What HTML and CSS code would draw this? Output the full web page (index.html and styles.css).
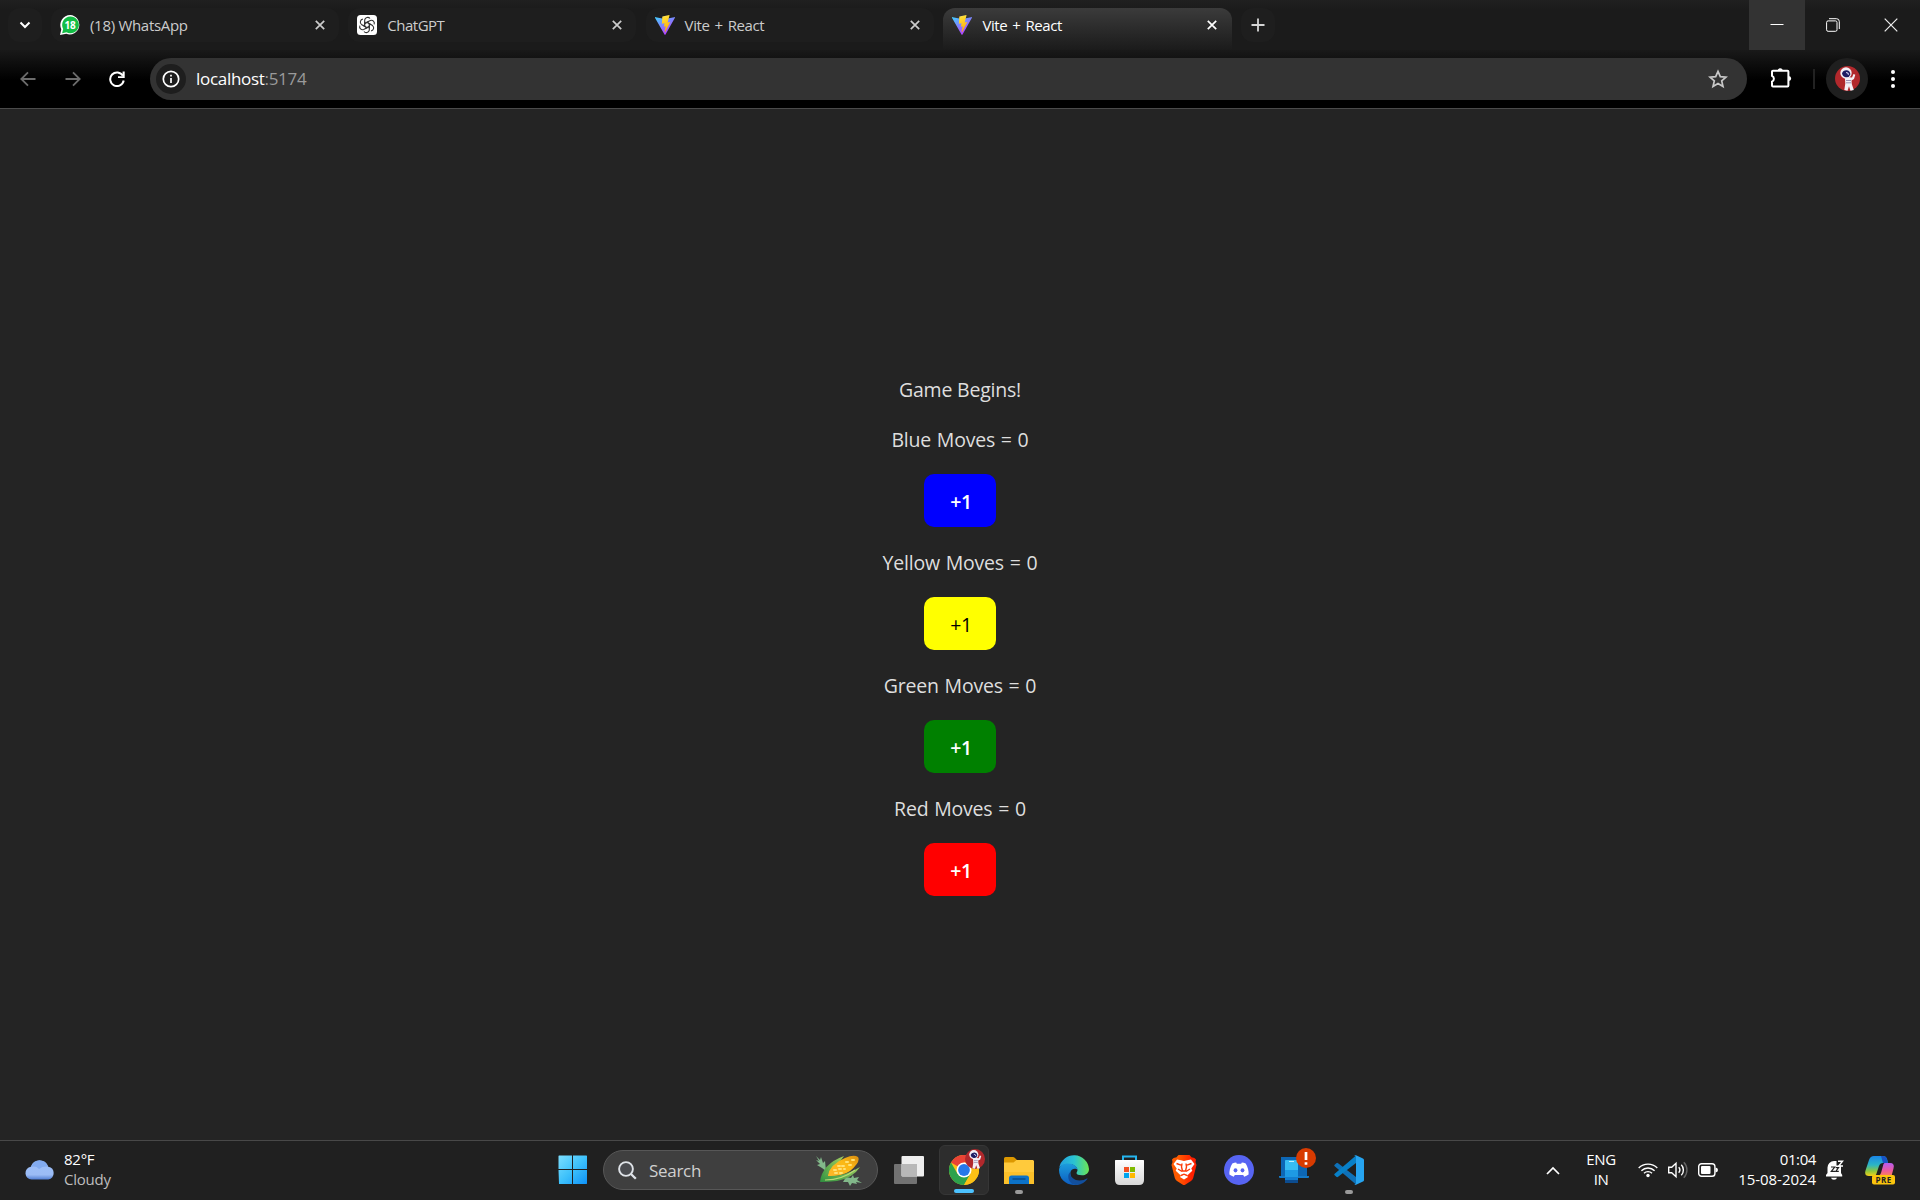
FILE: index.html
```html
<!DOCTYPE html>
<html lang="en">
<head>
<meta charset="utf-8">
<title>Vite + React</title>
<link rel="stylesheet" href="styles.css">
</head>
<body>
<svg class="defs" width="0" height="0" aria-hidden="true">
  <defs>
    <linearGradient id="viteA" x1="0" y1="0" x2=".65" y2="1"><stop offset="0" stop-color="#41d1ff"/><stop offset="1" stop-color="#bd34fe"/></linearGradient>
    <linearGradient id="viteB" x1=".4" y1="0" x2=".6" y2="1"><stop offset="0" stop-color="#ffea83"/><stop offset=".1" stop-color="#ffdd35"/><stop offset="1" stop-color="#ffa800"/></linearGradient>
    <symbol id="vite" viewBox="0 0 20 20">
      <path fill="url(#viteA)" d="M19.8 3 10.5 19.6a.6.6 0 0 1-1 0L.1 3a.5.5 0 0 1 .6-.8L10 3.900l9.200-1.700a.5.5 0 0 1 .6.8z"/>
      <path fill="url(#viteB)" d="M14.300.1 7.500 1.400a.3.3 0 0 0-.2.300L6.900 8.700l2.600-.4-.6 3.400 1.800-.4-1 5.200c-.1.600.3.700.6.200l5-9.800-2.700.5 1.900-6.900z"/>
    </symbol>
    <symbol id="x" viewBox="0 0 10 10"><path d="M.8.8l8.400 8.400M9.200.8.8 9.200" stroke="currentColor" stroke-width="1.700" fill="none"/></symbol>
    <symbol id="astro" viewBox="0 0 25 25">
      <circle cx="12.500" cy="12.500" r="12.500" fill="#b1282c"/>
      <path fill="#f3eff5" d="M10 13q-1-1 2-2l5 .5 1.500-3.500 1.800.8-1.300 4.200-2.500 1.500.3 3.500 2 6-3.300.7-1.500-4.500-1.500 4.500-3.200-.7 1-6.500z"/>
      <circle cx="11" cy="7" r="5.700" fill="#f3eff5"/>
      <path d="M7 7.500Q8 4 12 4.300q3.500.7 3.300 4.200-1 3.300-4.600 2.700Q7.500 10.500 7 7.500z" fill="#1d1c63"/><path d="M11 6.500q2.300 0 2.500 2.300" fill="none" stroke="#c9c8ea" stroke-width="1.200"/>
      <path d="M11 14.500h5M11 16.800h5" stroke="#9a8fb4" stroke-width="1"/>
    </symbol>
  </defs>
</svg>

<header class="tabstrip">
  <button class="tab-search"><svg width="12" height="8" viewBox="0 0 12 8"><path d="M1.500 1.500 6 6l4.500-4.500" fill="none" stroke="#fff" stroke-width="2"/></svg></button>
  <div class="tab">
    <svg class="favicon" viewBox="0 0 20 20"><path d="M10.300 0a9.700 9.700 0 1 1-4 18.800L0 20l1.300-5.600A10 10 0 0 1 10.300 0z" fill="#fff"/><path d="M10.300 1.500a8.400 8.400 0 1 1-3.800 15.800l-4.400 1 1.100-4.200A8.500 8.500 0 0 1 10.300 1.500z" fill="#12bd45"/><text x="10.100" y="13.600" text-anchor="middle" class="fav-count">18</text></svg>
    <span class="tab-title t-wa">(18) WhatsApp</span><svg class="close"><use href="#x"/></svg>
  </div>
  <div class="tab">
    <svg class="favicon" viewBox="0 0 20 20"><rect width="20" height="20" rx="3.500" fill="#fff"/><g fill="none" stroke="#333" stroke-width="1.100"><path id="petal" d="M10 7.300 7.700 8.600V4.900A3 3 0 0 1 13 3.500M10 7.300l4.100 2.400"/><use href="#petal" transform="rotate(60 10 10)"/><use href="#petal" transform="rotate(120 10 10)"/><use href="#petal" transform="rotate(180 10 10)"/><use href="#petal" transform="rotate(240 10 10)"/><use href="#petal" transform="rotate(300 10 10)"/></g></svg>
    <span class="tab-title t-gpt">ChatGPT</span><svg class="close"><use href="#x"/></svg>
  </div>
  <div class="tab">
    <svg class="favicon"><use href="#vite"/></svg><span class="tab-title t-vite">Vite + React</span><svg class="close"><use href="#x"/></svg>
  </div>
  <div class="tab active">
    <svg class="favicon"><use href="#vite"/></svg><span class="tab-title t-vite">Vite + React</span><svg class="close"><use href="#x"/></svg>
  </div>
  <button class="new-tab"><svg width="14" height="14" viewBox="0 0 14 14"><path d="M7 .5v13M.5 7h13" stroke="#d5d5d5" stroke-width="1.800"/></svg></button>
  <div class="window-controls">
    <button class="wc hover"><svg width="14" height="14"><path d="M.5 6.500h13" stroke="#fff"/></svg></button>
    <button class="wc"><svg width="14" height="14" viewBox="0 0 14 14" fill="none" stroke="#fff"><rect x=".6" y="2.900" width="10.400" height="10.400" rx="1.500"/><path d="M3 .7h7.500a2.800 2.800 0 0 1 2.800 2.800V11"/></svg></button>
    <button class="wc last"><svg width="14" height="14" viewBox="0 0 14 14"><path d="M.7.7l12.600 12.600M13.300.7.7 13.300" stroke="#eee" stroke-width="1.200"/></svg></button>
  </div>
</header>

<nav class="toolbar">
  <svg class="nav" viewBox="0 0 16 16"><path d="M15.500 8H1.500M8 1.300 1.300 8 8 14.700" stroke="#6c6c6c" stroke-width="1.800" fill="none"/></svg>
  <svg class="nav" viewBox="0 0 16 16"><path d="M.5 8h14M8 1.300 14.700 8 8 14.700" stroke="#6c6c6c" stroke-width="1.800" fill="none"/></svg>
  <svg class="nav" viewBox="0 0 16 16"><path d="M13.900 4.800A6.800 6.800 0 1 0 14.700 9.500" stroke="#fff" stroke-width="2" fill="none"/><path d="M15.700.4v6.700H9V5.200h4.600V.4z" fill="#fff"/></svg>
  <div class="omnibox">
    <span class="site-info"><svg width="18" height="18" viewBox="0 0 18 18"><circle cx="9" cy="9" r="7.700" fill="none" stroke="#fff" stroke-width="1.700"/><path d="M9 8v5M9 4.800v1.800" stroke="#fff" stroke-width="1.700"/></svg></span>
    <span class="url">localhost<i>:5174</i></span>
    <svg class="star" viewBox="0 0 20 20"><path d="M10 2.300l2.300 5.300 5.700.5-4.300 3.800 1.300 5.600-5-3-5 3 1.300-5.600L2 8.100l5.700-.5z" fill="none" stroke="#c8c8c8" stroke-width="1.700"/></svg>
  </div>
  <svg class="ext" viewBox="0 0 22 22"><path d="M3 3.700h14.500q.9 0 .9.900v14q0 .9-.9.900H3q-1 0-1-.9v-4a3.100 3.100 0 0 0 0-5.700V4.600q0-.9 1-.9z" fill="none" stroke="#fff" stroke-width="2"/><path d="M7.700 3.700a2.500 2.500 0 0 1 5 0M18.700 9a2.500 2.500 0 0 1 0 5" fill="#fff"/></svg>
  <i class="divider"></i>
  <span class="profile"><svg width="25" height="25"><use href="#astro"/></svg></span>
  <svg class="kebab" viewBox="0 0 6 20" fill="#fff"><circle cx="3" cy="3" r="2"/><circle cx="3" cy="10" r="2"/><circle cx="3" cy="17" r="2"/></svg>
</nav>

<main class="page">
  <p class="status">Game Begins!</p>
  <p>Blue Moves = 0</p>
  <button class="move blue">+1</button>
  <p>Yellow Moves = 0</p>
  <button class="move yellow">+1</button>
  <p>Green Moves = 0</p>
  <button class="move green">+1</button>
  <p>Red Moves = 0</p>
  <button class="move red">+1</button>
</main>

<footer class="taskbar">
  <div class="weather">
    <svg width="30" height="20" viewBox="0 0 30 20"><defs><linearGradient id="cl" x1="0" y1="0" x2="0" y2="1"><stop offset="0" stop-color="#9dc0fb"/><stop offset=".75" stop-color="#9bbcf5"/><stop offset="1" stop-color="#527fd4"/></linearGradient></defs><path d="M6.500 19.500A6.400 6.400 0 0 1 5.800 6.800 9.300 9.300 0 0 1 23.300 6.700a6.500 6.500 0 0 1 0 12.800z" fill="url(#cl)"/><path d="M6 7q5-1.500 8 2 4-3 9-2.300Q20.500.3 14.500.3T6 7z" fill="#82abf0"/></svg>
    <div class="weather-text"><span>82°F</span><span class="dim">Cloudy</span></div>
  </div>

  <div class="apps">
    <span class="tile start"><svg width="30" height="30" viewBox="0 0 30 30"><defs><linearGradient id="win" gradientUnits="userSpaceOnUse" x1="0" y1="0" x2="29" y2="29"><stop offset="0" stop-color="#7fe0ff"/><stop offset=".5" stop-color="#3fc2fb"/><stop offset="1" stop-color="#0e92f8"/></linearGradient></defs><path d="M1 .500h13v13.500H.500V1zM15 .500h13.500l.5.500v13H15zM.500 15H14v14H1zM15 15h14v13.500l-.5.500H15z" fill="url(#win)"/></svg></span>
    <div class="search">
      <svg class="glass" viewBox="0 0 19 19"><circle cx="8" cy="8" r="6.900" fill="#4a4c50" stroke="#dfe3e8" stroke-width="1.900"/><path d="M13 13l4.800 4.800" stroke="#dfe3e8" stroke-width="2.300"/></svg>
      <span>Search</span>
      <svg class="corn" viewBox="0 0 48 31"><defs><linearGradient id="cob" x1="0" y1="1" x2="1" y2="0"><stop offset="0" stop-color="#ffb52b"/><stop offset=".6" stop-color="#fbb915"/><stop offset="1" stop-color="#d98c10"/></linearGradient><linearGradient id="husk" x1="0" y1="1" x2="1" y2="0"><stop offset="0" stop-color="#2e9140"/><stop offset="1" stop-color="#a3cf62"/></linearGradient></defs>
        <path d="M1 1l4 4 1-3 2 6 2-2 1 10-4-3-5-3 3-1-4-4 3 1zM31 22l5 1 2-3 1 3 5-1-2 3 5 3-6-1 1 2-5-1-2 3-2-4-5 0z" fill="#82b88a"/>
        <path d="M5 27Q7 9 29 1 25 7 14 18z" fill="url(#husk)"/>
        <path d="M12 22Q15 9 30 3q9-4 13-1 3 5-8 14-9 6-21 5z" fill="url(#cob)"/>
        <path d="M20 18h2M25 18h2M19 15h2M24 14h2M29 14h1M27 11h2M23 11h2M34 10h2M31 7h2M37 5h2" stroke="#ffe173" stroke-width="2" stroke-linecap="round"/>
        <path d="M5 27Q10 18 16 11q-3 5-3 10 16 1 32-9-7 11-23 14-8 1-17 1z" fill="url(#husk)"/><path d="M10 25Q27 25 40 15" fill="none" stroke="#b9d977" stroke-width="1.200"/></svg>
    </div>
    <span class="tile view"><svg width="30" height="28" viewBox="0 0 30 28"><rect x="0" y="8" width="23" height="20" rx="1" fill="#727272"/><rect x="7.500" y="0" width="22.500" height="20.500" rx="1" fill="#eee"/><path d="M7.500 8H23v12.500H8.500l-1-1z" fill="#b8b8b8"/></svg></span>
    <span class="tile open"><svg width="30" height="30" viewBox="0 0 30 30"><circle cx="15" cy="15" r="15" fill="#fbc116"/><path d="M15 15 2 7.500A15 15 0 0 1 28 7.500H15z" fill="#ea4335"/><path d="M2 7.500A15 15 0 0 0 15 30l6.500-11.200-13 0z" fill="#2da24c"/><path d="M15 7.500h13A15 15 0 0 1 15 30l6.500-11.200z" fill="#fbc116"/><circle cx="15" cy="15" r="7.500" fill="#fff"/><circle cx="15" cy="15" r="5.900" fill="#2678ea"/></svg><svg class="badge" width="20" height="20"><use href="#astro"/></svg><i class="run"></i></span>
    <span class="tile"><svg width="30" height="27" viewBox="0 0 30 27"><path d="M0 1.500Q0 0 1.500 0H9q1 0 1.700.7L13 3v6H0z" fill="#dc9800"/><path d="M0 5.500h9.500l3-2.500H29l1 1v23H0z" fill="#ffca3c"/><path d="M0 15h30v12H0z" fill="#fbc02a"/><path d="M5 27v-6q0-2.500 2.500-2.500h15Q25 18.500 25 21v6z" fill="#0c72c8"/><path d="M8.500 22h13" stroke="#064c8c" stroke-width="1.500"/></svg><i class="dot"></i></span>
    <span class="tile"><svg width="30" height="30" viewBox="0 0 30 30"><defs><linearGradient id="e1"><stop offset="0" stop-color="#239fe0"/><stop offset=".5" stop-color="#2ac3d2"/><stop offset="1" stop-color="#6ce553"/></linearGradient><linearGradient id="e2" x1="0" y1="0" x2="0" y2="1"><stop offset="0" stop-color="#1c9ddd"/><stop offset="1" stop-color="#0c5cc0"/></linearGradient></defs><path d="M.3 12.500A15 15 0 0 1 30 14c0 4-3 6.300-7 6.300-3.500 0-5.500-1-5.500-2.300 0-.8 1-1.300 1-3 0-3-4-6-8.500-6-4 0-7.500 1.500-9.700 3.500z" fill="url(#e1)"/><path d="M0 15C.3 10.500 4.500 8.500 9 8.500c5.500 0 9.500 3 9.500 6.500-1-2-6-2-7 2s3 11 8 12.500C9 32 0 25 0 15z" fill="url(#e2)"/><path d="M11.300 17c-.8 5 4 8.500 9.200 8.500 3 0 5.500-1 7.300-2 .5-.3 1 .1.600.600C25.500 28 21 30.500 16.500 30 9 28.500 7.500 20 11.300 17z" fill="#124f9d"/></svg></span>
    <span class="tile"><svg width="29" height="30" viewBox="0 0 29 30"><path d="M8 6V1.500h13V6" fill="none" stroke="#25b5ef" stroke-width="2"/><defs><linearGradient id="st" x1="0" y1="0" x2="0" y2="1"><stop offset="0" stop-color="#fff"/><stop offset="1" stop-color="#d8d8d8"/></linearGradient></defs><path d="M0 5.500q0-.5.500-.5h28q.5 0 .5.500V25q0 5-5 5H5q-5 0-5-5z" fill="url(#st)"/><path d="M9 12h5v5H9z" fill="#f25022"/><path d="M15 12h5v5h-5z" fill="#7fba00"/><path d="M9 18h5v5H9z" fill="#00a4ef"/><path d="M15 18h5v5h-5z" fill="#ffb900"/></svg></span>
    <span class="tile"><svg width="26" height="30" viewBox="0 0 26 30"><defs><linearGradient id="br"><stop offset=".3" stop-color="#ff5a00"/><stop offset=".8" stop-color="#ff2000"/></linearGradient></defs><path d="M7.500 0h11l2.300 2.600q2.200-.6 4.200 2L24.500 7l1 3-3.300 13q-.7 2-2.200 3l-5.500 3.500q-1.500 1-3 0L6 26q-1.500-1-2.200-3L.5 10l1-3L1 4.600q2-2.600 4.200-2z" fill="url(#br)"/><path d="M13 6l3-.8 4-.7 3.500 4.500-3.200 4.500 1 2.300-4.300 4-1.200 1 1.200 1.200L13 24.500 9 22l1.200-1.200-1.200-1-4.300-4 1-2.300L2.500 9 6 4.500l4 .7z" fill="#fff"/><path d="M5.500 8.500l4.500 1.700M20.500 8.500 16 10.200M11 8.500l-.5 3.500 1 4h3l1-4-.5-3.500M7 14l4 2.500M19 14l-4 2.500M10 20.500l3-1.300 3 1.300" fill="none" stroke="#fb3b08" stroke-width="1.400"/></svg></span>
    <span class="tile"><svg width="30" height="30" viewBox="0 0 30 30"><circle cx="15" cy="15" r="15" fill="#5764f2"/><path d="M8.300 8.600q2-.9 3.900-1.100l.6 1.200h4.400l.6-1.200q2 .2 3.900 1.100 3.100 5 2.900 11-2.100 1.600-4.400 2.200l-1-1.700h-8.400l-1 1.700q-2.300-.6-4.400-2.200-.2-6 2.900-11z" fill="#fff"/><ellipse cx="11.500" cy="15.300" rx="1.900" ry="2.100" fill="#5764f2"/><ellipse cx="18.500" cy="15.300" rx="1.900" ry="2.100" fill="#5764f2"/></svg></span>
    <span class="tile"><svg width="30" height="26" viewBox="0 0 30 26"><path d="M2 0h26v20H2z" fill="#0d67b5"/><path d="M0 19h30v1.500L29 21H1l-1-.5z" fill="#1479c8"/><path d="M6 4q0-1 1-1h12v23H6z" fill="#137ed0"/><path d="M6 4q0-1 1-1h12v10H6z" fill="#37bdf2"/><path d="M6 13h13v7H6z" fill="#1e9ae4"/><path d="M6 23h13v3H6z" fill="#0c4c8f"/><path d="M10 4.500h5" stroke="#bdf0ff"/></svg><svg class="badge" width="20" height="20"><circle cx="10" cy="10" r="10" fill="#d83b01"/><path d="M10 4v8M10 14.200v2.600" stroke="#fff" stroke-width="2.700"/></svg></span>
    <span class="tile"><svg width="30" height="30" viewBox="0 0 30 30"><path d="M.7 9.800 2.300 8.300q.9-.8 1.800-.1L22 22v7.500L.7 11.200q-.9-.7 0-1.400z" fill="#0f71b8"/><path d="M.7 20.200l1.600 1.500q.9.800 1.800.1L22 8V.500L.7 18.800q-.9.700 0 1.400z" fill="#0880c8"/><path d="M22 .2 29 3.400q1 .5 1 1.600v20q0 1.100-1 1.600l-7 3.200q-1.200.4-2-.5 2 .7 2-1.300V2Q22 0 20 .7q.8-.9 2-.5z" fill="#26a4f0"/></svg><i class="dot"></i></span>
  </div>

  <div class="tray">
    <svg class="chev" viewBox="0 0 14 9"><path d="M1 8l6-6 6 6" fill="none" stroke="#fff" stroke-width="1.700"/></svg>
    <div class="lang"><span>ENG</span><span>IN</span></div>
    <svg class="wifi" viewBox="0 0 20 16" fill="none" stroke="#fff" stroke-width="1.400"><path d="M.7 6a13 13 0 0 1 18.600 0M3.400 8.700a9.300 9.300 0 0 1 13.200 0M6 11.300a5.700 5.700 0 0 1 8 0"/><circle cx="10" cy="13.500" r="1.700" fill="#fff" stroke="none"/></svg>
    <svg class="vol" viewBox="0 0 20 18" fill="none" stroke="#fff" stroke-width="1.400"><path d="M.7 6.200h3L8 2.300v13.400l-4.300-3.900h-3zM10.700 6.300a4 4 0 0 1 0 5.400M13.300 3.800a7.500 7.500 0 0 1 0 10.400"/><path d="M15.800 1.300a11 11 0 0 1 0 15.400" stroke="#666"/></svg>
    <svg class="bat" viewBox="0 0 20 14"><rect x=".7" y=".7" width="16.200" height="12.600" rx="2.800" fill="none" stroke="#fff" stroke-width="1.400"/><rect x="3" y="3" width="9.500" height="8" rx="1" fill="#fff"/><path d="M17.500 4.500q2.500.3 2.500 2.500t-2.500 2.500z" fill="#fff"/></svg>
    <div class="clock"><span class="hm">01:04</span><span class="date">15-08-2024</span></div>
    <svg class="bell" viewBox="0 0 18 20"><path d="M1.500 13V7.500A6.500 6.500 0 0 1 8 1h2.500v4.500h4.500V13l1.200 2v1.500H0V15zM5 17.800h6q-.5 2-3 2t-3-2z" fill="#fff"/><path d="M5 7h3.700L5.300 11.300H9M9.700 7.700h2.800l-2.700 3.600h3" fill="none" stroke="#222" stroke-width="1.200"/><path d="M12 1.300h4.500L12.700 6H17" fill="none" stroke="#fff" stroke-width="1.400"/></svg>
    <svg class="copilot" viewBox="0 0 30 29"><defs><linearGradient id="c1" x1="0" y1="0" x2="0" y2="1"><stop offset="0" stop-color="#1a86e8"/><stop offset=".45" stop-color="#2bb5c5"/><stop offset=".75" stop-color="#8cc63e"/><stop offset="1" stop-color="#f5cf17"/></linearGradient><linearGradient id="c2" x1="0" y1="0" x2="0" y2="1"><stop offset="0" stop-color="#b65cf0"/><stop offset=".6" stop-color="#ee5b9b"/><stop offset="1" stop-color="#fa8454"/></linearGradient></defs><path d="M9 0h9q3 0 4 3l1 4h-5q-3 0-4 3l-2.500 7.500Q11 20 8 20H4q-5 0-3.500-5.500L4 4q1.300-4 5-4z" fill="url(#c1)"/><path d="M16 0h2q3 0 4 3l1 4h-5z" fill="#1854c5"/><path d="M19.500 7H25q5 0 3.500 5.500L26.500 20H12q3 0 4-3l2.500-9z" fill="url(#c2)"/><rect x="7" y="19" width="23" height="9.500" rx="2" fill="#fbc40d"/><text x="18.600" y="26.800" text-anchor="middle" class="pre">PRE</text></svg>
  </div>
</footer>
</body>
</html>
```
FILE: styles.css
```css
* { box-sizing: border-box; }
body {
  margin: 0;
  width: 1920px;
  height: 1200px;
  overflow: hidden;
  display: flex;
  flex-direction: column;
  background: #242424;
  color: #fff;
  font-family: "Open Sans", "Noto Sans", sans-serif;
}
button { border: 0; padding: 0; background: none; font: inherit; color: inherit; }
svg { display: block; flex: none; }
.defs { position: absolute; }

/* tab strip */
.tabstrip {
  height: 50px;
  display: flex;
  align-items: flex-start;
  padding: 8px 0 0 8px;
  background: linear-gradient(#202020, #1b1b1b 10px, #1b1b1b);
}
.tab-search, .new-tab {
  display: flex;
  align-items: center;
  justify-content: center;
  width: 34px;
  height: 34px;
  border-radius: 12px;
  background: #1e1e1e;
}
.tab-search { margin-right: 9px; }
.tab-search svg { margin-top: -1px; }
.tab {
  display: flex;
  align-items: center;
  width: 288px;
  height: 34px;
  margin-right: 9.3px;
  padding: 0 14px 0 9px;
  border-radius: 12px;
  background: #1e1e1e;
  color: #ccc;
}
.tab.active {
  width: 289px;
  height: 42px;
  padding: 0 15px 8px 9.500px;
  border-radius: 12px 12px 0 0;
  background: linear-gradient(#3b3b3b, #1b1b1b);
  color: #fff;
}
.favicon { width: 20px; height: 20px; }
.fav-count { font: bold 10px "Open Sans", sans-serif; fill: #fff; }
.tab-title { margin-left: 10px; font-size: 15px; line-height: 20px; flex: 1; white-space: nowrap; }
.t-wa { letter-spacing: -0.3px; }
.t-gpt { letter-spacing: -0.5px; }
.t-vite { letter-spacing: -0.4px; word-spacing: 1.5px; }
.close { width: 10px; height: 10px; }
.window-controls { display: flex; margin: -8px 0 0 auto; }
.wc { display: flex; align-items: center; justify-content: center; width: 56px; height: 49px; }
.wc.last { width: 59px; }
.hover { background: #333; height: 50px; }

/* toolbar */
.toolbar {
  height: 59px;
  display: flex;
  align-items: center;
  padding: 0 0 1px 20px;
  border-bottom: 1px solid #4b4b4b;
  background: linear-gradient(#191919, #000 30px);
}
.nav { width: 16px; height: 16px; margin-right: 28.5px; }
.nav:nth-child(3) { margin-right: 25px; }
.omnibox {
  width: 1597px;
  height: 42px;
  display: flex;
  align-items: center;
  padding: 0 19px 0 6px;
  border-radius: 21px;
  background: #333;
}
.site-info { width: 30px; height: 30px; border-radius: 50%; background: #1e1e1e; display: grid; place-items: center; }
.url { flex: 1; margin-left: 10px; padding-top: 1px; font-size: 17px; letter-spacing: -0.3px; line-height: 24px; }
.url i { font-style: normal; color: #9a9a9a; }
.star { width: 20px; height: 20px; }
.ext { width: 22px; height: 22px; margin-left: 23px; margin-bottom: 2px; }
.divider { width: 2px; height: 20px; margin-left: 21px; background: #222; }
.profile { width: 42px; height: 42px; margin-left: 11px; border-radius: 50%; background: #1f1f1f; display: grid; place-items: center; }
.kebab { width: 6px; height: 20px; margin-left: 21.500px; }

/* page */
.page {
  flex: 1;
  display: flex;
  flex-direction: column;
  align-items: center;
  padding-top: 265px;
  color: #dedede;
}
.page p { margin: 0 0 20px; padding-top: 2px; font-size: 19.500px; line-height: 28px; letter-spacing: -0.2px; word-spacing: 0.9px; }
.page .status { word-spacing: 0; }
.move {
  flex: none;
  width: 72px;
  height: 53px;
  margin-bottom: 20px;
  padding: 2px 0 0 2px;
  border-radius: 10px;
  font-size: 19.500px;
  font-weight: 600;
  letter-spacing: -0.5px;
}
.blue { background: #00f; color: #fff; }
.yellow { background: #ff0; color: #000; font-weight: 500; }
.green { background: #008000; color: #fff; }
.red { background: #f00; color: #fff; }

/* taskbar */
.taskbar {
  height: 60px;
  display: grid;
  grid-template-columns: 548px 826px 1fr;
  padding-bottom: 1px;
  border-top: 1px solid #484848;
  background: #202020;
}
.weather { display: flex; align-items: center; padding-left: 25px; gap: 9px; }
.weather-text, .lang, .clock { display: flex; flex-direction: column; padding-bottom: 3px; font-size: 15px; line-height: 20px; letter-spacing: -0.4px; }
.weather-text { letter-spacing: -0.25px; }
.date { letter-spacing: -0.05px; }
.dim { color: #bdbdbd; }
.apps { display: flex; align-items: center; }
.tile { position: relative; flex: none; width: 50px; height: 50px; margin-right: 5px; display: grid; place-items: center; border-radius: 6px; }
.tile.open { background: #2d2d2d; border: 1px solid #363636; }
.search {
  flex: none;
  display: flex;
  align-items: center;
  width: 275px;
  height: 40px;
  margin-right: 6px;
  padding: 0 14px 0 14px;
  border: 1px solid #575757;
  border-radius: 20px;
  background: #3f3f3f;
  color: #d0d0d0;
  font-size: 17px;
  letter-spacing: -0.3px;
}
.glass { width: 19px; height: 19px; margin-right: 12px; }
.search span { flex: 1; }
.corn { width: 48px; height: 31px; }
.badge { position: absolute; right: 3px; top: 3px; }
.run, .dot { position: absolute; bottom: 1px; left: 50%; transform: translateX(-50%); width: 20px; height: 4px; border-radius: 2px; background: #4cc2ff; }
.dot { width: 8px; background: #9a9a9a; }
.tray { display: flex; align-items: center; padding-left: 172px; }
.chev { width: 14px; height: 9px; margin-right: 26px; }
.lang { width: 30px; align-items: center; margin-right: 22px; }
.wifi { width: 20px; height: 16px; margin-right: 10px; }
.vol { width: 20px; height: 18px; margin-right: 10px; }
.bat { width: 20px; height: 14px; }
.clock { width: 98px; align-items: flex-end; white-space: nowrap; }
.bell { width: 18px; height: 20px; margin-left: 10px; }
.copilot { width: 30px; height: 29px; margin-left: 21px; }
.pre { font: bold 8px "Open Sans", sans-serif; fill: #222; letter-spacing: 0.5px; }
```
